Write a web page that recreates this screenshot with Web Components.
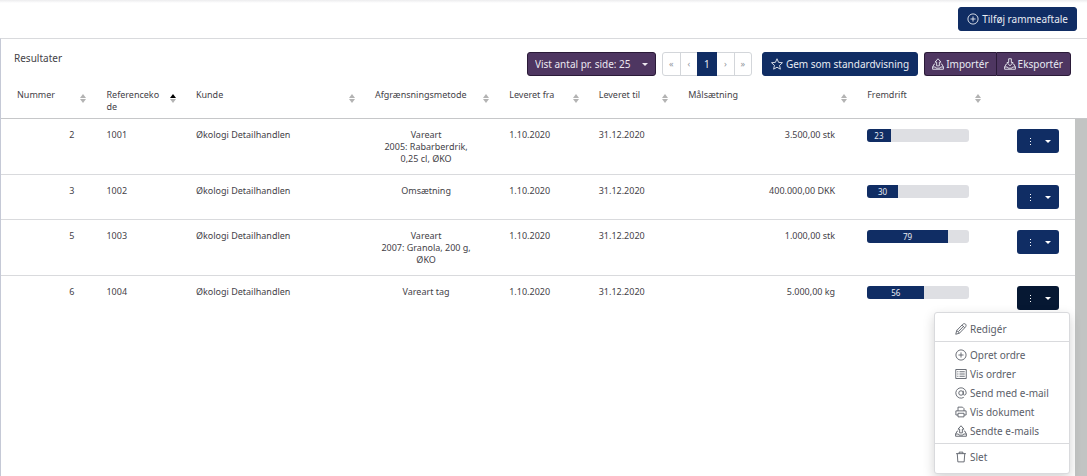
<!DOCTYPE html>
<html lang="da">
<head>
<meta charset="utf-8">
<title>Rammeaftaler</title>
<style>
  html { height: 100%; }
  body {
    --navy: #102d64;
    --navy-dark: #061833;
    --purple: #4e3661;
    --purple-dark: #2a1a38;
    --line: #d9dadd;
    --line-strong: #c6c7c9;
    --text: #444248;
    margin: 0;
    min-height: 100%;
    display: flex;
    flex-direction: column;
    background: #fff;
    color: var(--text);
    font: 10px/12px "Noto Sans", "Open Sans", sans-serif;
  }
  agreements-page { flex: 1; }
</style>
</head>
<body>
<agreements-page></agreements-page>
<script>
const define = (name, html, setup) => {
  const template = document.createElement('template');
  template.innerHTML = html;
  customElements.define(name, class extends HTMLElement {
    connectedCallback() {
      if (this.shadowRoot) return;
      this.attachShadow({ mode: 'open' }).append(template.content.cloneNode(true));
      if (setup) setup(this, this.shadowRoot);
    }
  });
};

const ICONS = {
  plus: '<circle cx="8" cy="8" r="6.8"/><path d="M8 4.6v6.8M4.6 8h6.8"/>',
  star: '<path d="M8 1l2.100 4.800 5.200.5-3.900 3.500 1.100 5.100L8 12.300l-4.500 2.600 1.100-5.100L.7 6.300l5.200-.5z"/>',
  upload: '<path d="M8 1l4 4.500H9.800v5H6.200v-5H4z"/><path d="M4.200 8H3L.8 12h3.700l1 1.500h5l1-1.500h3.700L13 8h-1.200M.8 12v3h14.400v-3"/>',
  download: '<path d="M6.200 1h3.600v5H12l-4 4.500L4 6h2.200z"/><path d="M4.200 8H3L.8 12h3.700l1 1.500h5l1-1.500h3.700L13 8h-1.200M.8 12v3h14.400v-3"/>',
  pen: '<path d="M1 15l1.300-5L10 2c1.500-1.500 3.300-1.300 4.100-.4.900.9 1 2.500-.4 4L6 13.500zM2.300 10L6 13.500M4.500 11.500l7-7.200M9.300 2.800l3.700 3.600"/>',
  list: '<path d="M1 2h14v12H1zM6 5h7M6 8h7M6 11h7M3 5h1.500M3 8h1.500M3 11h1.500"/>',
  at: '<circle cx="8" cy="8" r="3"/><path d="M11 5v4.300c0 2.300 3.900 2 3.900-1.500A6.900 6.900 0 1 0 11.700 13.800"/>',
  print: '<path d="M4 6.500v-5h6l2 2v3M4 12H1.200V6.500h13.600V12H12M4 9.700h8v4.800H4z"/>',
  trash: '<path d="M1.500 3.500h13M5.500 3.500v-2h5v2M3 3.500l.8 11h8.400l.8-11"/>'
};

define('ui-icon', `
  <style>
    :host { display: inline-flex; width: 12px; height: 12px; flex: none; }
    svg { width: 100%; height: 100%; fill: none; stroke: currentColor; stroke-width: 1.2; stroke-linejoin: round; }
  </style>
  <svg viewBox="0 0 16 16" aria-hidden="true"></svg>`,
  (host, root) => { root.querySelector('svg').innerHTML = ICONS[host.getAttribute('name')]; });

define('ui-button', `
  <style>
    :host { display: inline-flex; }
    button {
      display: flex; align-items: center; gap: 3px;
      height: 24px; box-sizing: border-box; padding: 0 8px;
      border: 1px solid var(--navy); border-radius: 3px;
      background: var(--navy); color: #e9ecf3;
      font: inherit; line-height: 16px; white-space: nowrap;
    }
    :host([variant=secondary]) button { background: var(--purple); border-color: var(--purple-dark); padding: 0 7px; gap: 2px; }
    :host([side=left]) button { border-radius: 3px 0 0 3px; border-right: 0; }
    :host([side=right]) button { border-radius: 0 3px 3px 0; }
  </style>
  <button type="button"><ui-icon></ui-icon><span><slot></slot></span></button>`,
  (host, root) => {
    const icon = document.createElement('ui-icon');
    icon.setAttribute('name', host.getAttribute('icon'));
    root.querySelector('ui-icon').replaceWith(icon);
  });

define('page-size', `
  <style>
    :host { display: inline-grid; align-items: center; color: #ece8f0; }
    select, svg { grid-area: 1 / 1; }
    select {
      appearance: none; height: 24px; box-sizing: border-box; margin: 0; padding: 0 24px 0 7px;
      border: 1px solid var(--purple-dark); border-radius: 3px;
      background: var(--purple); color: inherit; font: inherit; line-height: 16px;
    }
    svg { justify-self: end; margin-right: 8px; width: 6px; height: 3px; fill: currentColor; pointer-events: none; }
  </style>
  <select aria-label="Antal pr. side"><option>Vist antal pr. side: 25</option></select>
  <svg viewBox="0 0 6 3" aria-hidden="true"><path d="M0 0h6L3 3z"/></svg>`);

define('page-nav', `
  <style>
    :host { display: block; }
    nav { display: flex; height: 24px; box-sizing: border-box; border: 1px solid #d3d6da; border-radius: 3px; }
    a {
      display: flex; align-items: center; justify-content: center; width: 17px; box-sizing: border-box;
      color: #8f949b; text-decoration: none; font-size: 9px;
    }
    a + a { border-left: 1px solid #d3d6da; }
    a[aria-current] { width: 20px; margin: -1px 0; border: 0; background: var(--navy); color: #e9ecf3; font-size: 10px; }
    a[aria-current] + a { border: 0; }
  </style>
  <nav aria-label="Sider">
    <a href="#first">«</a><a href="#prev">‹</a><a href="#1" aria-current="page">1</a><a href="#next">›</a><a href="#last">»</a>
  </nav>`);

define('progress-meter', `
  <style>
    :host { display: block; }
    .track { height: 13px; border-radius: 3px; background: #dedfe3; overflow: hidden; }
    .bar { height: 100%; display: flex; align-items: center; justify-content: center; background: var(--navy); color: #e9ecf3; font-size: 8px; line-height: 12px; }
  </style>
  <div class="track" role="progressbar" aria-valuemin="0" aria-valuemax="100" aria-label="Fremdrift"><div class="bar"></div></div>`,
  (host, root) => {
    const value = host.getAttribute('value');
    root.querySelector('.track').setAttribute('aria-valuenow', value);
    const bar = root.querySelector('.bar');
    bar.style.width = value + '%';
    bar.textContent = value;
  });

define('row-menu', `
  <style>
    :host { display: block; position: relative; width: 42px; height: 24px; }
    .toggle {
      display: flex; align-items: center; justify-content: flex-end; gap: 14px;
      width: 100%; height: 100%; padding: 0 8px; border: 0; border-radius: 3px;
      background: var(--navy); color: #fff; font: inherit;
    }
    :host([open]) .toggle { background: var(--navy-dark); }
    .dots { width: 1px; height: 7px; }
    .caret { width: 6px; height: 3px; }
    .toggle svg { fill: currentColor; }
    .menu {
      display: none; position: absolute; z-index: 1; top: 26px; right: -11px;
      width: 136px; box-sizing: border-box; padding: 6px 0 7px;
      border: 1px solid var(--line); border-radius: 3px; background: #fff;
      box-shadow: 0 4px 12px rgb(0 0 0 / 18%);
    }
    :host([open]) .menu { display: block; }
    .menu button {
      display: flex; align-items: center; gap: 3px; width: 100%; height: 19px; padding: 0 0 0 20px;
      border: 0; background: none; color: #5b6069; font: inherit; font-size: 10px; line-height: 16px; white-space: nowrap;
    }
    hr { margin: 3px 0; border: 0; border-top: 1px solid var(--line); }
  </style>
  <button class="toggle" type="button" aria-haspopup="menu" aria-label="Handlinger">
    <svg class="dots" viewBox="0 0 1 7"><path d="M0 0h1v1H0zM0 3h1v1H0zM0 6h1v1H0z"/></svg>
    <svg class="caret" viewBox="0 0 6 3"><path d="M0 0h6L3 3z"/></svg>
  </button>
  <div class="menu" role="menu">
    <button type="button" role="menuitem"><ui-icon name="pen"></ui-icon>Redigér</button>
    <hr>
    <button type="button" role="menuitem"><ui-icon name="plus"></ui-icon>Opret ordre</button>
    <button type="button" role="menuitem"><ui-icon name="list"></ui-icon>Vis ordrer</button>
    <button type="button" role="menuitem"><ui-icon name="at"></ui-icon>Send med e-mail</button>
    <button type="button" role="menuitem"><ui-icon name="print"></ui-icon>Vis dokument</button>
    <button type="button" role="menuitem"><ui-icon name="upload"></ui-icon>Sendte e-mails</button>
    <hr>
    <button type="button" role="menuitem"><ui-icon name="trash"></ui-icon>Slet</button>
  </div>`,
  (host, root) => root.querySelector('.toggle').addEventListener('click', () => host.toggleAttribute('open')));

define('sort-arrows', `
  <style>
    :host { display: block; width: 6px; height: 9px; }
    svg { display: block; width: 6px; height: 9px; fill: #b3b3b3; }
    :host([dir=asc]) .up { fill: #000; }
  </style>
  <svg viewBox="0 0 6 9" aria-hidden="true"><path class="up" d="M3 0l3 4H0z"/><path d="M0 5h6L3 9z"/></svg>`);

const ROWS = [
  { no: 2, ref: 1001, method: 'Vareart<br>2005: Rabarberdrik, 0,25 cl, ØKO', goal: '3.500,00 stk', value: 23 },
  { no: 3, ref: 1002, method: 'Omsætning', goal: '400.000,00 DKK', value: 30 },
  { no: 5, ref: 1003, method: 'Vareart<br>2007: Granola, 200 g, ØKO', goal: '1.000,00 stk', value: 79 },
  { no: 6, ref: 1004, method: 'Vareart tag', goal: '5.000,00 kg', value: 56, open: true }
];

define('agreements-table', `
  <style>
    :host { --head: 40px; display: flex; align-items: stretch; font-size: 9px; }
    .data { flex: 1; min-width: 0; }
    .scroll { width: 12px; box-sizing: border-box; margin-top: calc(var(--head) - 1px); border-top: 1px solid var(--line-strong); background: #c2c4c3; }
    table { width: 100%; table-layout: fixed; border-collapse: separate; border-spacing: 0; }
    .one { width: 8.33%; } .half { width: 12.5%; } .two { width: 16.67%; }
    th { height: var(--head); box-sizing: border-box; padding: 10px 16px 5px; border-bottom: 1px solid var(--line-strong); font-weight: 400; text-align: left; vertical-align: top; }
    .head { display: flex; justify-content: space-between; }
    .head span { flex: 1; min-width: 0; overflow-wrap: anywhere; }
    .head sort-arrows { margin: 5px -12px 0 8px; }
    td { padding: 10px 16px 9px; border-bottom: 1px solid var(--line); vertical-align: top; }
    tr:last-child td { border-bottom: 0; }
    .num { text-align: right; }
    .mid { text-align: center; }
    .act { display: flex; justify-content: flex-end; height: 25px; }
  </style>
  <div class="data">
    <table>
      <colgroup><col class="one"><col class="one"><col class="two"><col class="half"><col class="one"><col class="one"><col class="two"><col class="half"><col class="one"></colgroup>
      <thead><tr>
        <th><div class="head"><span>Nummer</span><sort-arrows></sort-arrows></div></th>
        <th aria-sort="ascending"><div class="head"><span>Referencekode</span><sort-arrows dir="asc"></sort-arrows></div></th>
        <th><div class="head"><span>Kunde</span><sort-arrows></sort-arrows></div></th>
        <th><div class="head"><span>Afgrænsningsmetode</span><sort-arrows></sort-arrows></div></th>
        <th><div class="head"><span>Leveret fra</span><sort-arrows></sort-arrows></div></th>
        <th><div class="head"><span>Leveret til</span><sort-arrows></sort-arrows></div></th>
        <th><div class="head"><span>Målsætning</span><sort-arrows></sort-arrows></div></th>
        <th><div class="head"><span>Fremdrift</span><sort-arrows></sort-arrows></div></th>
        <th></th>
      </tr></thead>
      <tbody></tbody>
    </table>
  </div>
  <div class="scroll"></div>`,
  (host, root) => {
    root.querySelector('tbody').innerHTML = ROWS.map(r => `<tr>
      <td class="num">${r.no}</td><td>${r.ref}</td><td>Økologi Detailhandlen</td>
      <td class="mid">${r.method}</td><td>1.10.2020</td><td>31.12.2020</td>
      <td class="num">${r.goal}</td><td><progress-meter value="${r.value}"></progress-meter></td>
      <td><div class="act"><row-menu${r.open ? ' open' : ''}></row-menu></div></td></tr>`).join('');
  });

define('agreements-page', `
  <style>
    :host { display: flex; flex-direction: column; }
    header { display: flex; justify-content: flex-end; padding: 7px 10px; background: linear-gradient(#ececee, #fff 3px); }
    section { flex: 1; display: flex; flex-direction: column; border: solid var(--line); border-width: 1px 0 0 1px; border-left-color: #c5c9d6; }
    .bar { display: flex; align-items: flex-start; padding: 13px 16px 3px 13px; }
    h1 { flex: 1; margin: 0; font-size: 10px; line-height: 12px; font-weight: 400; }
    .tools { display: flex; gap: 6px; }
    .group { display: flex; }
    .tools page-nav { margin-right: 4px; }
    agreements-table { flex: 1; }
  </style>
  <header><ui-button icon="plus">Tilføj rammeaftale</ui-button></header>
  <section>
    <div class="bar">
      <h1>Resultater</h1>
      <div class="tools">
        <page-size></page-size>
        <page-nav></page-nav>
        <ui-button icon="star">Gem som standardvisning</ui-button>
        <div class="group">
          <ui-button variant="secondary" side="left" icon="upload">Importér</ui-button>
          <ui-button variant="secondary" side="right" icon="download">Eksportér</ui-button>
        </div>
      </div>
    </div>
    <agreements-table></agreements-table>
  </section>`);
</script>
</body>
</html>
